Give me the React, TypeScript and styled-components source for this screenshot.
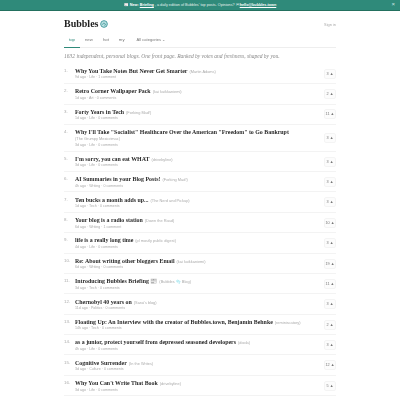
import React from "react";
import styled, { createGlobalStyle } from "styled-components";

const Global = createGlobalStyle`
  html, body { margin: 0; padding: 0; background: #fff; }
  body { font-family: "Liberation Sans", Arial, sans-serif; overflow: hidden; }
  #root { filter: blur(0.3px); }
`;

const Banner = styled.div`
  height: 11px;
  box-sizing: border-box;
  background: #2f8a7a;
  border-bottom: 1px solid #23705f;
  color: #e4f2ef;
  font-size: 3.75px;
  display: flex;
  align-items: center;
  justify-content: center;
  position: relative;
  gap: 1px;
  b { color: #fff; }
  u { color: #fff; font-weight: 700; }
`;

const Close = styled.span`
  position: absolute;
  right: 5px;
  top: 1px;
  font-size: 6px;
  color: #cfe6e1;
`;

const Page = styled.main`
  width: 272px;
  margin: 0 auto;
  padding-top: 6px;
`;

const Header = styled.header`
  display: flex;
  align-items: center;
  justify-content: space-between;
`;

const Brand = styled.h1`
  margin: 0;
  font: 700 10px/14px "Liberation Serif", Georgia, serif;
  color: #222;
  display: flex;
  align-items: center;
  gap: 2px;
`;

const SignIn = styled.a`
  font-size: 3.9px;
  color: #aaa;
`;

const Tabs = styled.nav`
  display: flex;
  align-items: center;
  margin-top: 2px;
  border-bottom: 1px solid #eee;
  height: 14px;
`;

const Tab = styled.a<{ $active?: boolean }>`
  height: 14px;
  box-sizing: border-box;
  padding: 0 5px 1px;
  display: flex;
  align-items: center;
  gap: 1px;
  font-size: 4.3px;
  color: ${(p) => (p.$active ? "#2f8a7a" : "#777")};
  border-bottom: 1px solid ${(p) => (p.$active ? "#2f8a7a" : "transparent")};
  margin-bottom: -1px;
`;

const CategoryTab = styled(Tab)`
  margin-left: 2px;
  font-size: 4.1px;
`;

const Tagline = styled.p`
  margin: 4px 0 3.8px;
  font: italic 5.5px/8px "Liberation Serif", Georgia, serif;
  color: #888;
`;

const List = styled.ol`
  list-style: none;
  margin: 0;
  padding: 0;
`;

const Row = styled.li`
  display: flex;
  align-items: center;
  border-bottom: 1px solid #f3f3f3;
  padding: 3.2px 0 2.7px;
`;

const Num = styled.span`
  width: 11px;
  flex: none;
  align-self: flex-start;
  font: 4.4px/8px "Liberation Sans", sans-serif;
  color: #aaa;
`;

const Body = styled.div`
  flex: 1;
  min-width: 0;
`;

const Title = styled.div`
  font: 700 5.9px/8px "Liberation Serif", Georgia, serif;
  color: #2a2a2a;
  small {
    font: 400 3.9px/0 "Liberation Sans", sans-serif;
    color: #aaa;
    margin-left: 2px;
  }
`;

const SubBlog = styled.div`
  font-size: 3.9px;
  line-height: 6.4px;
  color: #aaa;
`;

const Meta = styled.div`
  margin-top: 0.5px;
  font-size: 3.6px;
  line-height: 5px;
  color: #aaa;
`;

const Vote = styled.button`
  flex: none;
  width: 12px;
  height: 10px;
  padding: 0;
  background: #fcfcfc;
  border: 1px solid #f4f4f4;
  border-radius: 2px;
  font: 3.8px/8px "Liberation Sans", sans-serif;
  color: #777;
`;

type Post = { title: string; blog: string; meta: string; votes: number; wrap?: boolean };

const posts: Post[] = [
  { title: "Why You Take Notes But Never Get Smarter", blog: "(Martin Adams)", meta: "9d ago · Life · 1 comment", votes: 3 },
  { title: "Retro Corner Wallpaper Pack", blog: "(kai kuikkaniemi)", meta: "1d ago · Art · 0 comments", votes: 2 },
  { title: "Forty Years in Tech", blog: "(Forking Mad!)", meta: "1d ago · Life · 0 comments", votes: 11 },
  { title: "Why I'll Take \"Socialist\" Healthcare Over the American \"Freedom\" to Go Bankrupt", blog: "(The Grumpy Mexicrimac)", meta: "3d ago · Life · 0 comments", votes: 3, wrap: true },
  { title: "I'm sorry, you can eat WHAT", blog: "(drivebyline)", meta: "3d ago · Life · 0 comments", votes: 3 },
  { title: "AI Summaries in your Blog Posts!", blog: "(Forking Mad!)", meta: "4h ago · Writing · 0 comments", votes: 3 },
  { title: "Ten bucks a month adds up...", blog: "(The Nerd and Pickup)", meta: "1d ago · Tech · 0 comments", votes: 3 },
  { title: "Your blog is a radio station", blog: "(Down the Road)", meta: "6d ago · Writing · 1 comment", votes: 10 },
  { title: "life is a really long time", blog: "(pl mostly public digest)", meta: "4d ago · Life · 0 comments", votes: 3 },
  { title: "Re: About writing other bloggers Email", blog: "(kai kuikkaniemi)", meta: "6d ago · Writing · 0 comments", votes: 19 },
  { title: "Introducing Bubbles Briefing 📰", blog: "(Bubbles 🫧 Blog)", meta: "3d ago · Tech · 0 comments", votes: 11 },
  { title: "Chernobyl 40 years on", blog: "(Sarai's blog)", meta: "11d ago · Politics · 0 comments", votes: 3 },
  { title: "Floating Up: An Interview with the creator of Bubbles.town, Benjamin Behnke", blog: "(reminiscatory)", meta: "14h ago · Tech · 0 comments", votes: 2 },
  { title: "as a junior, protect yourself from depressed seasoned developers", blog: "(doola)", meta: "4h ago · Life · 0 comments", votes: 3 },
  { title: "Cognitive Surrender", blog: "(In the Writes)", meta: "3d ago · Culture · 0 comments", votes: 12 },
  { title: "Why You Can't Write That Book", blog: "(drivebyline)", meta: "3d ago · Life · 0 comments", votes: 5 },
];

const Logo = () => (
  <svg width="8" height="8" viewBox="0 0 24 24">
    <circle cx="12" cy="12" r="10" fill="#bfe3e4" stroke="#4a9da0" strokeWidth="3" />
    <path d="M8 14a4 4 0 1 1 6 3" fill="none" stroke="#4a9da0" strokeWidth="3" />
  </svg>
);

export default function App() {
  return (
    <>
      <Global />
      <Banner>
        <span>📰</span> <b>New:</b> <u>Briefing</u>, a daily edition of Bubbles' top posts. Opinions? ✉ <u>hello@bubbles.town</u>
        <Close>×</Close>
      </Banner>
      <Page>
        <Header>
          <Brand>Bubbles <Logo /></Brand>
          <SignIn>Sign in</SignIn>
        </Header>
        <Tabs>
          <Tab $active>top</Tab>
          <Tab>new</Tab>
          <Tab>hot</Tab>
          <Tab>my</Tab>
          <CategoryTab>All categories ⌄</CategoryTab>
        </Tabs>
        <Tagline>1632 independent, personal blogs. One front page. Ranked by votes and freshness, shaped by you.</Tagline>
        <List>
          {posts.map((p, i) => (
            <Row key={p.title}>
              <Num>{i + 1}.</Num>
              <Body>
                <Title>{p.title}{!p.wrap && <small>{p.blog}</small>}</Title>
                {p.wrap && <SubBlog>{p.blog}</SubBlog>}
                <Meta>{p.meta}</Meta>
              </Body>
              <Vote>{p.votes} ▲</Vote>
            </Row>
          ))}
        </List>
      </Page>
    </>
  );
}
